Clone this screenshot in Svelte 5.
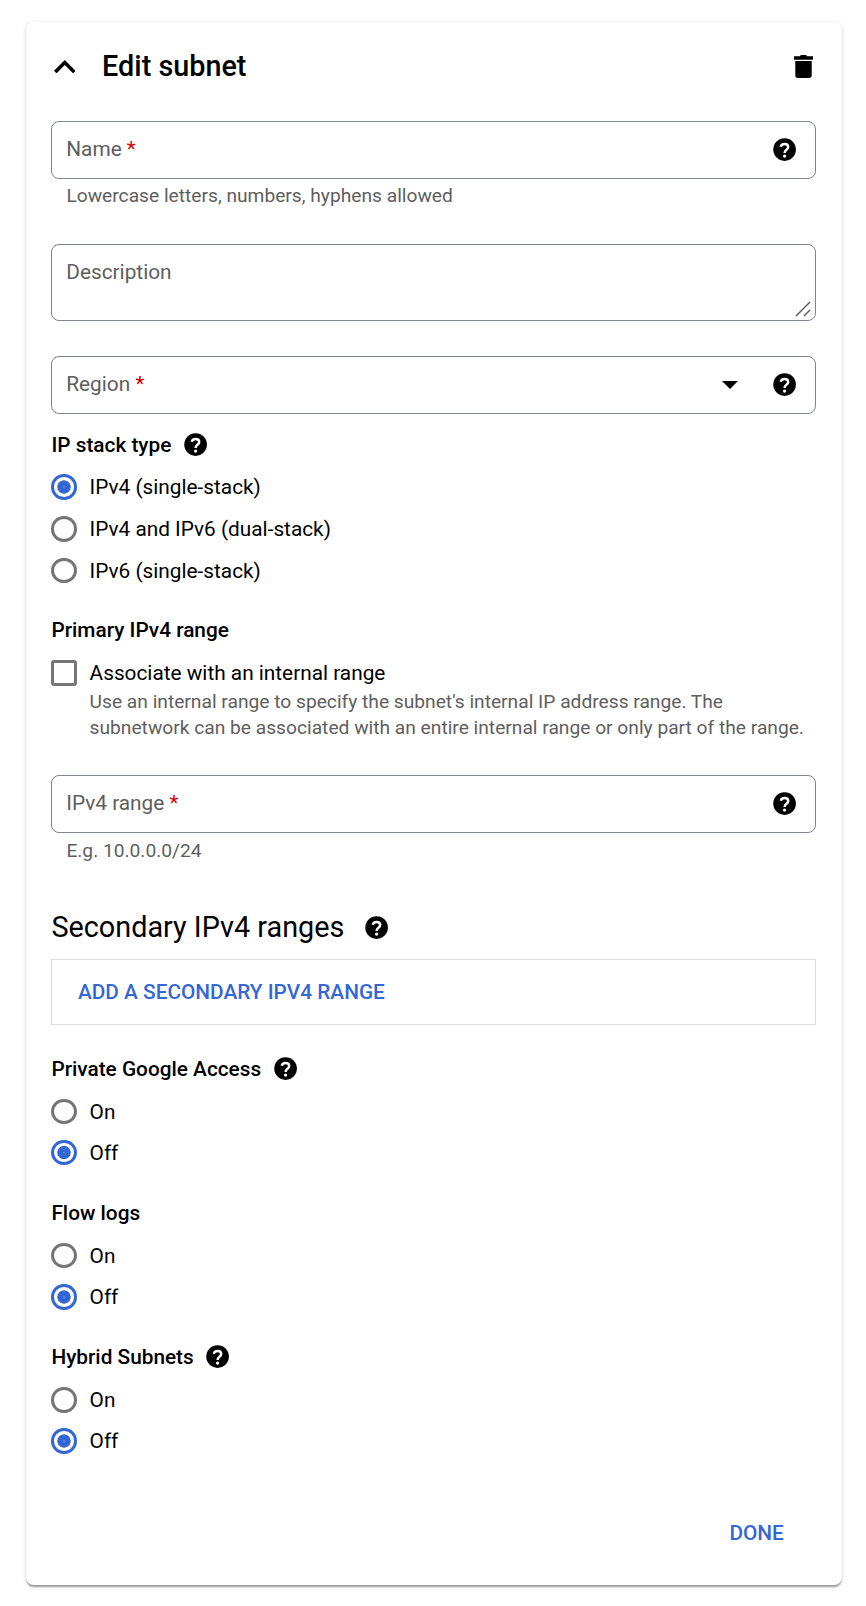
<script>
  let stack = $state('IPv4 (single-stack)');
  let toggles = $state({ access: 'Off', logs: 'Off', hybrid: 'Off' });
  let associate = $state(false);

  const stackOptions = ['IPv4 (single-stack)', 'IPv4 and IPv6 (dual-stack)', 'IPv6 (single-stack)'];
  const sections = [
    { key: 'access', title: 'Private Google Access', help: true },
    { key: 'logs', title: 'Flow logs', help: false },
    { key: 'hybrid', title: 'Hybrid Subnets', help: true }
  ];
</script>

{#snippet helpIcon()}
  <svg class="help" viewBox="0 0 24 24" aria-hidden="true">
    <circle cx="12" cy="12" r="10" />
    <path class="hook" d="M8.6 9.5C8.9 7.9 10.3 7 12 7c1.9 0 3.2 1.1 3.2 2.7 0 2.5-3.2 2.5-3.2 5.2" />
    <circle class="dot" cx="12" cy="17.7" r="1.45" />
  </svg>
{/snippet}

{#snippet radio(label, checked, select)}
  <button class="option" role="radio" aria-checked={checked} onclick={select}>
    <span class="ring" class:checked></span>
    <span class="text">{label}</span>
  </button>
{/snippet}

<div class="page">
  <main class="card">
    <header class="header">
      <svg class="chevron" viewBox="6 8 12 7.41" aria-hidden="true"><path d="M12 8l-6 6 1.41 1.41L12 10.83l4.59 4.58L18 14z" /></svg>
      <h1>Edit subnet</h1>
      <svg class="trash" viewBox="0 0 19 23" aria-hidden="true">
        <path d="M5.8 1.3L7 0h5l1.2 1.3H19V4.7H0V1.3zM1.3 6H17.7V20.3A2.7 2.7 0 0 1 15 23H4A2.7 2.7 0 0 1 1.3 20.3z" />
      </svg>
    </header>

    <div class="field"><span class="label">Name <b>*</b></span>{@render helpIcon()}</div>
    <p class="hint">Lowercase letters, numbers, hyphens allowed</p>

    <div class="field area">
      <span class="label">Description</span>
      <svg class="grip" viewBox="0 0 16 16" aria-hidden="true"><path d="M1 15L15 1M9 15L15 9" /></svg>
    </div>

    <div class="field region">
      <span class="label">Region <b>*</b></span>
      <svg class="arrow" viewBox="0 0 16 8" aria-hidden="true"><path d="M0 0h16L8 8z" /></svg>
      {@render helpIcon()}
    </div>

    <section class="stack">
      <h2><span class="text">IP stack type</span>{@render helpIcon()}</h2>
      <div class="options" role="radiogroup">
        {#each stackOptions as name}
          {@render radio(name, stack === name, () => (stack = name))}
        {/each}
      </div>
    </section>

    <section class="primary">
      <h2><span class="text">Primary IPv4 range</span></h2>
      <button class="option" role="checkbox" aria-checked={associate} onclick={() => (associate = !associate)}>
        <span class="box" class:ticked={associate}></span>
        <span class="text">Associate with an internal range</span>
      </button>
      <p class="note">Use an internal range to specify the subnet's internal IP address range. The<br />subnetwork can be associated with an entire internal range or only part of the range.</p>
    </section>

    <div class="field range"><span class="label">IPv4 range <b>*</b></span>{@render helpIcon()}</div>
    <p class="hint">E.g. 10.0.0.0/24</p>

    <h2 class="secondary"><span>Secondary IPv4 ranges</span>{@render helpIcon()}</h2>
    <div class="adder"><button class="link text">ADD A SECONDARY IPV4 RANGE</button></div>

    {#each sections as s}
      <section class="toggle">
        <h2><span class="text">{s.title}</span>{#if s.help}{@render helpIcon()}{/if}</h2>
        <div class="options" role="radiogroup">
          {#each ['On', 'Off'] as value}
            {@render radio(value, toggles[s.key] === value, () => (toggles[s.key] = value))}
          {/each}
        </div>
      </section>
    {/each}

    <footer><button class="link text">DONE</button></footer>
  </main>
</div>

<style>
  :global(body) {
    background: #fff;
  }
  .page {
    box-sizing: border-box;
    height: 1606px;
    padding: 22px 24px 21px 25.8px;
  }
  .card {
    box-sizing: border-box;
    height: 1563px;
    padding: 0 25.6px;
    display: flow-root;
    border-radius: 8px;
    background: #fff;
    box-shadow:
      0 3.2px 1.6px -1.6px rgba(0, 0, 0, 0.2),
      0 1.6px 1.6px rgba(0, 0, 0, 0.14),
      0 1.6px 4.8px rgba(0, 0, 0, 0.12);
    color: #000;
    font: 400 20.8px/25.6px Roboto, sans-serif;
  }
  h1, h2, p {
    margin: 0;
  }
  svg {
    display: block;
    flex: none;
  }
  button {
    padding: 0;
    border: 0;
    background: none;
    color: inherit;
    font: inherit;
    text-align: left;
  }
  .header {
    height: 88px;
    margin-bottom: 11px;
    display: flex;
    align-items: center;
  }
  .chevron {
    width: 21.6px;
    height: 13.4px;
    margin: 1px 26.8px 0 2.3px;
  }
  h1 {
    flex: 1;
    padding-top: 2px;
    font-size: 28.8px;
    font-weight: 500;
  }
  .trash {
    width: 19px;
    height: 23px;
    margin: 1px 3px 0 0;
  }
  .help {
    width: 27.2px;
    height: 27.2px;
  }
  .hook {
    fill: none;
    stroke: #fff;
    stroke-width: 2.2;
  }
  .dot {
    fill: #fff;
  }
  .text {
    padding-top: 2px;
  }
  .field {
    position: relative;
    box-sizing: border-box;
    height: 57.6px;
    padding: 0 17px 0 13.9px;
    display: flex;
    align-items: center;
    border: 1px solid #80868b;
    border-radius: 8px;
  }
  .label {
    flex: 1;
    color: #5e5e5e;
  }
  .label b {
    color: #d50000;
    font-weight: 400;
  }
  .hint {
    margin: 4.4px 0 0 15px;
    color: #5e5e5e;
    font-size: 19.2px;
  }
  .area {
    height: 76.8px;
    margin-top: 35.4px;
    padding-top: 15.2px;
    align-items: flex-start;
  }
  .grip {
    position: absolute;
    right: 4px;
    bottom: 3px;
    width: 16px;
    height: 16px;
    fill: none;
    stroke: #555;
    stroke-width: 1.4;
  }
  .region {
    margin-top: 35.2px;
  }
  .arrow {
    width: 16px;
    height: 8px;
    margin-right: 33.4px;
  }
  h2 {
    height: 25.6px;
    display: flex;
    align-items: center;
    gap: 10.6px;
    font-size: 20.8px;
    font-weight: 500;
  }
  .stack {
    margin-top: 18.2px;
  }
  .options {
    margin-top: 17px;
    display: grid;
    gap: 16.2px;
  }
  .option {
    height: 25.6px;
    display: flex;
    align-items: center;
    gap: 12.6px;
  }
  .option .text {
    padding-top: 1.6px;
  }
  .ring, .box {
    box-sizing: border-box;
    width: 25.6px;
    height: 25.6px;
    border: 3.2px solid #757575;
    border-radius: 50%;
  }
  .box {
    border-radius: 3.2px;
  }
  .box.ticked {
    background: #3367d6;
  }
  .ring.checked {
    border-color: #3367d6;
    background: radial-gradient(circle, #8facea 0, #3367d6 1.2px, #3367d6 6.3px, transparent 7px);
  }
  .primary {
    margin-top: 33.1px;
  }
  .primary .option {
    margin-top: 17.8px;
  }
  .note {
    margin: 3px 0 0 38.2px;
    color: #5e5e5e;
    font-size: 19.2px;
    line-height: 26px;
    white-space: nowrap;
  }
  .range {
    margin-top: 34.4px;
  }
  .range + .hint {
    margin-top: 5.2px;
  }
  .secondary {
    height: 38.4px;
    margin-top: 44.8px;
    gap: 18.6px;
    font-size: 28.8px;
    font-weight: 400;
  }
  .adder {
    box-sizing: border-box;
    height: 65.8px;
    margin: 12.4px 0 31px;
    padding: 0 25.6px;
    display: flex;
    align-items: center;
    border: 1px solid #dadce0;
  }
  .link {
    color: #3367d6;
    font-weight: 500;
  }
  .toggle {
    margin-bottom: 34.3px;
  }
  .toggle .options {
    margin-top: 17.5px;
    gap: 15.5px;
  }
  footer {
    margin-top: 65.2px;
    padding-right: 32.6px;
    display: flex;
    justify-content: flex-end;
  }
</style>
